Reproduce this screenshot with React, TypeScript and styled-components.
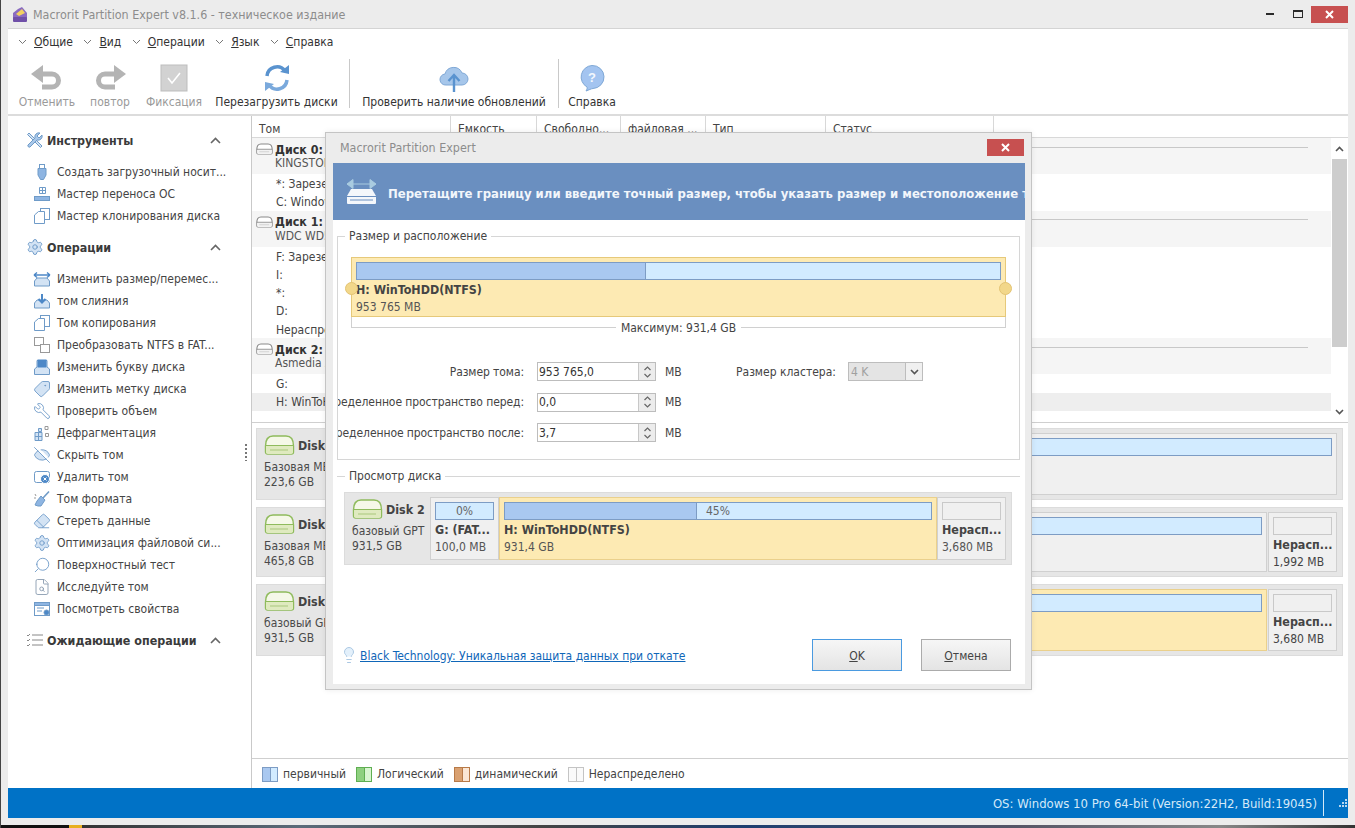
import React from "react";
import styled, { createGlobalStyle } from "styled-components";
import { Search, Wrench, Tag, EyeOff, Eraser, FileSearch, Settings, Lightbulb } from "lucide-react";

const FONT = `"DejaVu Sans Condensed", "Noto Sans", "Liberation Sans", sans-serif`;

const Global = createGlobalStyle`
  html, body { margin: 0; padding: 0; overflow: hidden; background: #ececec; }
  #root { width: 1355px; height: 828px; }
  * { box-sizing: border-box; }
  body { font-family: ${FONT}; font-size: 12px; color: #3c3c3c; }
`;

const Shell = styled.div`
  position: relative; width: 1355px; height: 828px; display: flex; flex-direction: column;
  background: #ececec; overflow: hidden; border-left: 1px solid #444;
`;
const TitleBar = styled.div`
  height: 28px; display: flex; align-items: center; padding: 0 7px 0 11px; flex: none;
`;
const TitleText = styled.span`margin-left: 5px; font-size: 12.4px; color: #8c8c8c; flex: 1;`;
const WinBtn = styled.div`
  width: 27px; height: 17px; display: flex; align-items: center; justify-content: center; margin-bottom: 0;
`;
const CloseBtn = styled.div<{ $w?: number }>`
  width: ${p => p.$w ?? 37}px; height: 17px; background: #c75050; display: flex; align-items: center; justify-content: center;
`;
const Frame = styled.div`
  flex: none; height: 790px; margin: 0 7px 0 7px; background: #fff; display: flex; flex-direction: column;
  border-top: 1px solid #d4d4d4;
`;
const MenuBar = styled.div`height: 26px; display: flex; align-items: center; padding-left: 10px; flex: none;`;
const MenuItem = styled.div`display: flex; align-items: center; gap: 7px; margin-right: 10.4px; color: #333;`;
const Under = styled.span`text-decoration: underline;`;
const Toolbar = styled.div`
  height: 61px; flex: none; display: flex; align-items: stretch; border-bottom: 2px solid #dcdcdc; padding-left: 10px;
`;
const ToolBtn = styled.div<{ $w: number; $off?: boolean }>`
  width: ${p => p.$w}px; display: flex; flex-direction: column; align-items: center; padding-top: 8px;
  color: ${p => (p.$off ? "#9a9a9a" : "#333")}; white-space: nowrap;
`;
const ToolIcon = styled.div`height: 30px; display: flex; align-items: center; margin-bottom: 2px;`;
const ToolSep = styled.div`width: 1px; background: #c9c9c9; margin: 4px 0 6px 0; flex: none;`;
const Main = styled.div`flex: 1; display: flex; min-height: 0;`;
const Sidebar = styled.aside`
  width: 244px; flex: none; position: relative; border-right: 1px solid #c9c9c9; padding: 12px 0 0 0;
`;
const SectionHead = styled.div<{ $mt?: number }>`
  height: 24px; display: flex; align-items: center; padding: 0 30px 0 18px; gap: 3px; margin-top: ${p => p.$mt ?? 0}px;
  font-weight: 700; color: #3a3a3a; font-size: 12.4px;
`;
const SectionLabel = styled.span`flex: 1; white-space: nowrap;`;
const ItemList = styled.div`margin-top: 9px;`;
const Item = styled.div`
  height: 22px; display: flex; align-items: center; padding-left: 25px; gap: 6px; color: #444; white-space: nowrap;
  & > svg { flex: none; }
`;
const GripDots = styled.div`
  position: absolute; right: 4px; top: 328px; width: 2px; height: 17px;
  background: repeating-linear-gradient(#777 0 2px, transparent 2px 4px);
`;
const Content = styled.div`flex: 1; min-width: 0; display: flex; flex-direction: column;`;
const TableHead = styled.div`
  height: 22px; display: flex; flex: none; border-bottom: 1px solid #d8d8d8;
`;
const HeadCell = styled.div<{ $w: number }>`
  width: ${p => p.$w}px; padding: 6px 0 0 7px; border-right: 1px solid #d8d8d8; flex: none; color: #444; white-space: nowrap; overflow: hidden;
`;
const ListPane = styled.div`
  height: 285px; flex: none; display: flex; border-bottom: 1px solid #cfcfcf; overflow: hidden;
`;
const ListBody = styled.div`flex: 1; min-width: 0;`;
const DiskHead = styled.div`height: 36.4px; background: #f5f5f5; padding: 4px 0 0 4px;`;
const DiskHeadTop = styled.div`height: 14px; display: flex; align-items: center; gap: 2px; font-weight: 700; font-size: 12.4px; color: #333; padding-right: 23px;`;
const HeadRule = styled.div`flex: 1; height: 1px; background: #c8c8c8; margin-left: 6px; margin-top: -4px;`;
const DiskSub = styled.div`height: 14px; padding-left: 19px; color: #555; white-space: nowrap;`;
const Row = styled.div<{ $sel?: boolean }>`
  height: 18.2px; padding: 1px 0 0 24px; display: flex; align-items: center; white-space: nowrap; color: #444;
  background: ${p => (p.$sel ? "#eeeeee" : "#fff")};
`;
const Scrollbar = styled.div`
  width: 16px; flex: none; display: flex; flex-direction: column; align-items: center; background: #fff; margin-right: 1px;
`;
const ScrollBtn = styled.div`height: 21px; display: flex; align-items: center; justify-content: center; flex: none;`;
const ScrollThumb = styled.div`width: 15px; height: 188px; background: #cdcdcd; flex: none;`;
const ScrollTrack = styled.div`flex: 1;`;
const DiskPane = styled.div`
  flex: 1; min-height: 0; padding: 5px 5px 0 4px; display: flex; flex-direction: column; gap: 7px;
`;
const DiskCard = styled.div<{ $h: number; $gap?: number }>`
  height: ${p => p.$h}px; flex: none; background: #e6e6e6; border: 1px solid #dcdcdc; display: flex; padding: 4px 5px 4px 0; gap: ${p => p.$gap ?? 1}px;
`;
const DiskInfo = styled.div<{ $w: number }>`
  width: ${p => p.$w}px; flex: none; padding: 2px 0 0 7px; color: #4a4a4a; white-space: nowrap; overflow: hidden;
`;
const DiskName = styled.div`display: flex; align-items: center; gap: 3px; font-weight: 700; font-size: 12.4px; height: 20px; margin-bottom: 5px; color: #444;`;
const InfoLine = styled.div`height: 15px; line-height: 15px; font-size: 12px;`;
const Part = styled.div<{ $kind?: "y" | "g"; $w?: number }>`
  ${p => (p.$w ? `width:${p.$w}px; flex:none;` : "flex:1; min-width:0;")}
  background: ${p => (p.$kind === "y" ? "#fdeab3" : "#f0f0f0")};
  border: 1px solid ${p => (p.$kind === "y" ? "#ead08c" : "#d0d0d0")};
  padding: 4px; overflow: hidden; white-space: nowrap;
`;
const Bar = styled.div<{ $empty?: boolean }>`
  height: 18px; border: 1px solid ${p => (p.$empty ? "#c9c9c9" : "#7d9cc4")};
  background: ${p => (p.$empty ? "#f0f0f0" : "#d2ebff")}; display: flex; position: relative; margin-bottom: 1px;
`;
const BarFill = styled.div`background: #a9c8f0; border-right: 1px solid #7d9cc4; height: 100%;`;
const BarLabel = styled.div`
  position: absolute; inset: 0; display: flex; align-items: center; justify-content: center; color: #666; font-size: 12px;
`;
const PartName = styled.div`font-weight: 700; height: 16px; line-height: 16px; margin-top: 2px; font-size: 12.4px; color: #444;`;
const PartSize = styled.div`height: 16px; line-height: 16px; margin-top: 1px; color: #555;`;
const Legend = styled.div`
  height: 30px; flex: none; border-top: 1px solid #cfcfcf; display: flex; align-items: center; padding: 1px 0 0 10px; color: #444;
`;
const Swatch = styled.div<{ $a: string; $b: string; $c: string }>`
  width: 16px; height: 15px; border: 1px solid ${p => p.$c};
  background: linear-gradient(90deg, ${p => p.$a} 50%, ${p => p.$c} 50%, ${p => p.$c} 56%, ${p => p.$b} 56%);
  margin-right: 5px; flex: none;
`;
const LegendText = styled.span`margin-right: 10px; white-space: nowrap;`;
const StatusBar = styled.div`
  height: 30px; flex: none; background: #0072c6; color: #d4e9f8; display: flex; align-items: center; justify-content: flex-end;
  font-size: 13px;
`;
const StatusSep = styled.div`width: 1px; height: 26px; background: #d4e9f8; margin: 0 15px 0 6px;`;
const Desk = styled.div`
  position: absolute; left: 0; right: 0; bottom: 0; height: 3px;
  background: linear-gradient(90deg,#111 0,#111 5%,#e8b020 5%,#e8b020 6%,#333 6%,#5b6b7a 22%,#444 40%,#1d3e70 55%,#556 75%,#888 90%,#333 100%);
`;

/* dialog */
const Dialog = styled.div`
  position: absolute; left: 324px; top: 132px; width: 707px; height: 558px; background: #ececec; border: 1px solid #c4c4c4;
  display: flex; flex-direction: column; padding: 0 6px 5px 7px; box-shadow: 0 0 6px rgba(0,0,0,.08);
`;
const DlgTitle = styled.div`height: 30px; flex: none; display: flex; align-items: center; justify-content: space-between; padding: 0 1px 2px 7px; color: #8c8c8c; font-size: 12.4px;`;
const DlgBody = styled.div`flex: 1; background: #fff; display: flex; flex-direction: column; min-height: 0;`;
const Banner = styled.div`
  height: 57px; flex: none; background: #6a8fc0; display: flex; align-items: center; padding-left: 13px; gap: 11px; overflow: hidden;
`;
const BannerText = styled.span`
  color: #f2f6fb; font-weight: 700; font-size: 13px; white-space: nowrap; margin-top: 4px;
`;
const Group = styled.fieldset`
  margin: 8px 5px 0 4px; padding: 13px 13px 0 13px; border: 1px solid #d6d6d6; height: 232px; min-width: 0; display: block;
`;
const GroupLegend = styled.legend<{ $ml: number }>`margin-left: ${p => p.$ml}px; padding: 0 4px; line-height: 16px; color: #444; height: 16px;`;
const LineGroup = styled.fieldset`
  margin: 8px 5px 0 4px; padding: 8px 8px 0 7px; border: 0; border-top: 1px solid #d6d6d6; min-width: 0;
`;
const SizePart = styled.div`
  position: relative; height: 60px; background: #fdeab3; border: 1px solid #e6c97a; padding: 4px;
`;
const Handle = styled.div<{ $right?: boolean }>`
  position: absolute; top: 24px; ${p => (p.$right ? "right:-7px" : "left:-7px")}; width: 13px; height: 13px; border-radius: 50%;
  background: #f2d78a; border: 1px solid #e3c373;
`;
const Bracket = styled.div`display: flex; height: 16px; color: #444; white-space: nowrap;`;
const BracketEdge = styled.div<{ $right?: boolean }>`
  flex: 1; height: 11px; border-bottom: 1px solid #d0d0d0;
  ${p => (p.$right ? "border-right" : "border-left")}: 1px solid #d0d0d0;
`;
const BracketText = styled.span`padding: 3px 5px 0; line-height: 16px;`;
const FormRows = styled.div`margin: 29px 0 0 -13px; display: flex; flex-direction: column; gap: 11.5px;`;
const FormRow = styled.div`height: 19px; display: flex; align-items: center;`;
const FormLabel = styled.div`
  width: 186px; flex: none; display: flex; justify-content: flex-end; overflow: hidden; white-space: nowrap; color: #444; letter-spacing: -0.08px;
`;
const Spin = styled.div`
  margin-left: 13px; width: 119px; height: 19px; flex: none; border: 1px solid #bdbdbd; display: flex; align-items: center; background: #fff;
  padding-left: 1px; color: #333;
`;
const SpinValue = styled.span`flex: 1;`;
const SpinBtn = styled.div`width: 17px; height: 100%; background: #ececec; border-left: 1px solid #c8c8c8; display: flex; align-items: center; justify-content: center;`;
const Unit = styled.span`margin-left: 9px; width: 28px; flex: none; color: #444;`;
const ClusterLabel = styled.span`margin-left: 43px; width: 112px; flex: none; color: #444;`;
const Select = styled.div`
  width: 75px; height: 19px; flex: none; border: 1px solid #bdbdbd; background: #e4e4e4; display: flex; align-items: center; color: #a0a0a0; padding-left: 2px;
`;
const SelectBtn = styled.div`width: 17px; height: 100%; background: #f0f0f0; border-left: 1px solid #bdbdbd; display: flex; align-items: center; justify-content: center; margin-left: auto;`;
const DlgFoot = styled.div`
  margin-top: auto; display: flex; align-items: center; padding: 0 14px 13px 7px;
`;
const HelpLink = styled.a`
  color: #0f66b8; text-decoration: underline; margin: 2px 0 0 2px; flex: 1; white-space: nowrap;
`;
const Btn = styled.div<{ $main?: boolean }>`
  width: 90px; height: 32px; margin-left: 19px; padding-top: 1px; display: flex; align-items: center; justify-content: center; color: #444; flex: none;
  background: linear-gradient(#f6f6f6, #e4e4e4); border: 1px solid ${p => (p.$main ? "#4a9ae0" : "#ababab")};
`;

const Chevron = () => (
  <svg width="9" height="6" viewBox="0 0 9 6"><path d="M1 1l3.5 3.5L8 1" fill="none" stroke="#777" strokeWidth="1" /></svg>
);
const ChevUp = () => (
  <svg width="11" height="7" viewBox="0 0 11 7"><path d="M1 6l4.5-4.5L10 6" fill="none" stroke="#666" strokeWidth="1.6" /></svg>
);
const HDD = ({ big, gray }: { big?: boolean; gray?: boolean }) => {
  const w = big ? 31 : 17, h = big ? 20 : 12;
  const s = gray ? "#8a8a8a" : "#8fbb5c";
  return (
    <svg width={w} height={h} viewBox="0 0 31 20" style={{ flex: "none" }}>
      <path d="M1.5 11 C1.5 5 4 1 9 1 H22 C27 1 29.5 5 29.5 11 V17 a2 2 0 0 1-2 2 H3.500 a2 2 0 0 1-2-2Z" fill={gray ? "#fff" : "#f5f8e8"} stroke={s} strokeWidth={big ? 1.4 : 2} />
      <path d="M2 11 H29 V17 a2 2 0 0 1-2 2 H4 a2 2 0 0 1-2-2Z" fill={gray ? "#f2f2f2" : "#dfeabf"} />
      <path d="M1.500 10.500H29.500" stroke={s} strokeWidth={big ? 1 : 1.600} />
      <path d="M6 15H24" stroke={gray ? "#bbb" : "#a9c77c"} strokeWidth="1" />
    </svg>
  );
};

const C = "#6f9bc8", L = "#d3e3f4", M = "#8eb5e2";
const S = ({ children }: { children: React.ReactNode }) => (
  <svg width="18" height="18" viewBox="0 0 18 18" fill="none" stroke={C} strokeWidth="1">{children}</svg>
);
const Tray = () => <path d="M1.500 11 L4 8 H14 L16.500 11 V16 H1.500Z" fill={L} />;
const lucideProps = { size: 18, color: C, strokeWidth: 1.2, fill: L };

const sideIcons: Record<string, React.ReactNode> = {
  usb: <S><rect x="6.500" y="1.500" width="5" height="4" fill="#fff" /><path d="M5 5.500h8V12l-2.500 4.500h-3L5 12Z" fill={M} /></S>,
  os: <S><path d="M6.500 2.500h6v6h-6zM9.500 2.500v6M6.500 5.500h6" fill="#fff" /><rect x="1.500" y="11.500" width="15" height="4" fill={M} /></S>,
  clone: <S><rect x="7.500" y="1.500" width="9" height="11" fill="#fff" /><path d="M1.500 16.500V8l4-3.500h6v12Z" fill="#fff" /></S>,
  resize: <S><Tray /><path d="M1 5h16M1 5l3-2.500M1 5l3 2.500M17 5l-3-2.500M17 5l-3 2.500" stroke="#4d88c7" strokeWidth="1.400" /></S>,
  merge: <S><Tray /><path d="M9 2v8M5.500 7L9 10.500 12.500 7" stroke="#4d88c7" strokeWidth="2" /></S>,
  conv: <S><rect x="1.500" y="1.500" width="9" height="8" fill="#fff" stroke="#999" /><rect x="7.500" y="8.500" width="9" height="8" fill="#fff" stroke="#999" /></S>,
  letter: <S><path d="M1.500 11 L4 9 V2.500h10V9l2.500 2V16.500h-15Z" fill={L} /><rect x="5" y="2" width="8" height="7" fill="#4d88c7" stroke="#4d88c7" /></S>,
  tag: <Tag {...lucideProps} style={{ transform: "scaleX(-1)" }} />,
  wrench: <Wrench {...lucideProps} fill="#fff" style={{ transform: "scaleX(-1)" }} />,
  defrag: <S><path d="M2 8.500h7v8H2zM2 12.500h7M5.500 8.500v8M5.500 4.500h3v3h-3z" fill={L} /><path d="M12 2.500h3v3h-3zM12.500 9.500h3v3h-3z" stroke="#999" /></S>,
  hide: <EyeOff {...lucideProps} />,
  del: <S><path d="M1.500 5.500a2 2 0 0 1 2-2h11a2 2 0 0 1 2 2v7a2 2 0 0 1-2 2h-11a2 2 0 0 1-2-2Z" fill="#fff" /><circle cx="12" cy="11" r="4.500" fill="#4d88c7" stroke="#fff" /><path d="M10.500 9.500l3 3M13.500 9.500l-3 3" stroke="#fff" /></S>,
  brush: <S><path d="M16 1.500L10 8" strokeWidth="1.600" /><path d="M4 11l4-5 4 4-4 6H5l-3-1Z" fill={M} /><path d="M2 4l1 2M1 8h2" stroke="#999" /></S>,
  eraser: <Eraser {...lucideProps} />,
  gear: <Settings {...lucideProps} />,
  search: <Search {...lucideProps} fill="#fff" style={{ transform: "scaleX(-1)" }} />,
  file: <FileSearch {...lucideProps} color="#8a9cb0" fill="#fff" />,
  props: <S><rect x="1.500" y="2.500" width="15" height="13" fill="#fff" /><rect x="1.500" y="2.500" width="15" height="3" fill={M} /><path d="M4 8h7M4 11h5" /><circle cx="13.500" cy="12.500" r="2.500" fill="#4d88c7" /></S>,
};

const sideTools: [string, string][] = [
  ["usb", "Создать загрузочный носит..."],
  ["os", "Мастер переноса ОС"],
  ["clone", "Мастер клонирования диска"],
];
const sideOps: [string, string][] = [
  ["resize", "Изменить размер/перемес..."],
  ["merge", "том слияния"],
  ["clone", "Том копирования"],
  ["conv", "Преобразовать NTFS в FAT..."],
  ["letter", "Изменить букву диска"],
  ["tag", "Изменить метку диска"],
  ["wrench", "Проверить объем"],
  ["defrag", "Дефрагментация"],
  ["hide", "Скрыть том"],
  ["del", "Удалить том"],
  ["brush", "Том формата"],
  ["eraser", "Стереть данные"],
  ["gear", "Оптимизация файловой си..."],
  ["search", "Поверхностный тест"],
  ["file", "Исследуйте том"],
  ["props", "Посмотреть свойства"],
];

const Arrow = ({ flip }: { flip?: boolean }) => (
  <svg width="34" height="28" viewBox="0 0 34 28" style={flip ? { transform: "scaleX(-1)" } : undefined}>
    <path d="M10 10H22a6.500 6.500 0 0 1 0 13H12" fill="none" stroke="#b4b4b4" strokeWidth="5" />
    <path d="M1 10L13 1V19Z" fill="#b4b4b4" />
  </svg>
);

function Unalloc({ size, w, dim }: { size: string; w: number; dim?: boolean }) {
  return (
    <Part $w={w}>
      <Bar $empty />
      <PartName>Нерасп...</PartName>
      <PartSize style={dim ? undefined : { color: "#444" }}>{size}</PartSize>
    </Part>
  );
}

function SpinRow({ label, value, children }: { label: string; value: string; children?: React.ReactNode }) {
  return (
    <FormRow>
      <FormLabel>{label}</FormLabel>
      <Spin>
        <SpinValue>{value}</SpinValue>
        <SpinBtn>
          <svg width="9" height="14" viewBox="0 0 9 14"><path d="M1.500 5L4.500 2l3 3M1.500 9l3 3 3-3" fill="none" stroke="#666" strokeWidth="1.200" /></svg>
        </SpinBtn>
      </Spin>
      <Unit>MB</Unit>
      {children}
    </FormRow>
  );
}

export default function App() {
  return (
    <Shell>
      <Global />
      <TitleBar>
        <svg width="16" height="17" viewBox="0 0 16 17">
          <path d="M1 15V7l5-4 4-2 5 6v8Z" fill="#8a6bc0" />
          <path d="M4 8l6-5 3 4-6 3Z" fill="#f2d060" />
          <rect x="1" y="11" width="14" height="5" rx="1" fill="#6f4fa8" />
        </svg>
        <TitleText>Macrorit Partition Expert v8.1.6 - техническое издание</TitleText>
        <WinBtn><svg width="9" height="4" viewBox="0 0 9 4"><rect y="1" width="8" height="2" fill="#2a2a2a" /></svg></WinBtn>
        <WinBtn><svg width="10" height="8" viewBox="0 0 10 8"><rect x=".5" y=".5" width="9" height="7" fill="none" stroke="#2a2a2a" /><rect width="10" height="2" fill="#2a2a2a" /></svg></WinBtn>
        <CloseBtn><svg width="9" height="9" viewBox="0 0 9 9"><path d="M1 1l7 7M8 1l-7 7" stroke="#fff" strokeWidth="2" /></svg></CloseBtn>
      </TitleBar>
      <Frame>
        <MenuBar>
          <MenuItem><Chevron /><span><Under>О</Under>бщие</span></MenuItem>
          <MenuItem><Chevron /><span><Under>В</Under>ид</span></MenuItem>
          <MenuItem><Chevron /><span><Under>О</Under>перации</span></MenuItem>
          <MenuItem><Chevron /><span><Under>Я</Under>зык</span></MenuItem>
          <MenuItem><Chevron /><span><Under>С</Under>правка</span></MenuItem>
        </MenuBar>
        <Toolbar>
          <ToolBtn $w={58} $off><ToolIcon><Arrow /></ToolIcon>Отменить</ToolBtn>
          <ToolBtn $w={68} $off><ToolIcon><Arrow flip /></ToolIcon>повтор</ToolBtn>
          <ToolBtn $w={60} $off>
            <ToolIcon>
              <svg width="28" height="28" viewBox="0 0 28 28"><rect x="1" y="1" width="26" height="26" fill="#d2d2d2" stroke="#bdbdbd" /><path d="M8 14l4 5 8-10" fill="none" stroke="#fff" strokeWidth="1.600" /></svg>
            </ToolIcon>
            Фиксация
          </ToolBtn>
          <ToolBtn $w={145}>
            <ToolIcon>
              <svg width="28" height="30" viewBox="0 0 28 30">
                <path d="M4 13A10 10 0 0 1 22 8" fill="none" stroke="#5a93cf" strokeWidth="3.500" />
                <path d="M17 9L26 11V2Z" fill="#5a93cf" />
                <path d="M24 17A10 10 0 0 1 6 22" fill="none" stroke="#7aa9dc" strokeWidth="3.500" />
                <path d="M11 21L2 19V28Z" fill="#7aa9dc" />
              </svg>
            </ToolIcon>
            Перезагрузить диски
          </ToolBtn>
          <ToolSep />
          <ToolBtn $w={208}>
            <ToolIcon>
              <svg width="30" height="30" viewBox="0 0 30 30">
                <path d="M7 22a5.500 5.500 0 0 1-1-11 9 9 0 0 1 17-1 6 6 0 0 1 0 12Z" fill="#a6c6ea" stroke="#7fa8d6" />
                <path d="M15 29V13M9.500 18L15 12l5.500 6" fill="none" stroke="#5a93cf" strokeWidth="2.400" />
              </svg>
            </ToolIcon>
            Проверить наличие обновлений
          </ToolBtn>
          <ToolSep />
          <ToolBtn $w={66}>
            <ToolIcon>
              <svg width="26" height="28" viewBox="0 0 26 28">
                <path d="M13 1.500a11.500 11.500 0 0 1 1 23c-2 .2-4 1.500-7 2.500 1-1.500 1.500-3 1-4A11.500 11.500 0 0 1 13 1.500Z" fill="#a3c4f0" stroke="#7fa8d6" />
                <text x="13" y="18" textAnchor="middle" fontSize="13" fontWeight="700" fill="#f4f8fd" fontFamily="Liberation Sans, sans-serif">?</text>
              </svg>
            </ToolIcon>
            Справка
          </ToolBtn>
        </Toolbar>
        <Main>
          <Sidebar>
            <SectionHead>
              <svg width="18" height="18" viewBox="0 0 18 18" fill="none" stroke="#6f9bc8">
                <path d="M3 2l13 13-1.500 1.500L1.500 3.500Z" fill="#d3e3f4" />
                <path d="M16 4l-3 3-2-2 3-3a4 4 0 0 0-5 5L2 14a1.500 1.500 0 0 0 2 2l7-7a4 4 0 0 0 5-5Z" fill="#a9c8ea" />
              </svg>
              <SectionLabel>Инструменты</SectionLabel><ChevUp />
            </SectionHead>
            <ItemList>
              {sideTools.map(([ic, t]) => <Item key={t}>{sideIcons[ic]}{t}</Item>)}
            </ItemList>
            <SectionHead $mt={8}>
              <Settings size={18} color={C} strokeWidth={1.3} fill={L} />
              <SectionLabel>Операции</SectionLabel><ChevUp />
            </SectionHead>
            <ItemList>
              {sideOps.map(([ic, t]) => <Item key={t}>{sideIcons[ic]}{t}</Item>)}
            </ItemList>
            <SectionHead $mt={8}>
              <svg width="18" height="14" viewBox="0 0 18 14" fill="none" stroke="#888">
                <path d="M6 2h11M6 7h11M6 12h11" /><path d="M1 2l1 1 2-2M1 7l1 1 2-2M1 12l1 1 2-2" />
              </svg>
              <SectionLabel>Ожидающие операции</SectionLabel><ChevUp />
            </SectionHead>
            <GripDots />
          </Sidebar>
          <Content>
            <TableHead>
              <HeadCell $w={199}>Том</HeadCell>
              <HeadCell $w={86}>Емкость</HeadCell>
              <HeadCell $w={84}>Свободно...</HeadCell>
              <HeadCell $w={85}>файловая ...</HeadCell>
              <HeadCell $w={120}>Тип</HeadCell>
              <HeadCell $w={168}>Статус</HeadCell>
            </TableHead>
            <ListPane>
              <ListBody>
                <DiskHead>
                  <DiskHeadTop><HDD gray />Диск 0:<HeadRule /></DiskHeadTop>
                  <DiskSub>KINGSTON SA400S37240G</DiskSub>
                </DiskHead>
                <Row>*: Зарезервировано</Row>
                <Row>C: Windows</Row>
                <DiskHead>
                  <DiskHeadTop><HDD gray />Диск 1:<HeadRule /></DiskHeadTop>
                  <DiskSub>WDC WD5000AAKX</DiskSub>
                </DiskHead>
                <Row>F: Зарезервировано</Row>
                <Row>I:</Row>
                <Row>*:</Row>
                <Row>D:</Row>
                <Row>Нераспределено</Row>
                <DiskHead>
                  <DiskHeadTop><HDD gray />Диск 2:<HeadRule /></DiskHeadTop>
                  <DiskSub>Asmedia ASM1153E</DiskSub>
                </DiskHead>
                <Row>G:</Row>
                <Row $sel>H: WinToHDD</Row>
              </ListBody>
              <Scrollbar>
                <ScrollBtn><svg width="9" height="6" viewBox="0 0 9 6"><path d="M1 5l3.500-3.500L8 5" fill="none" stroke="#555" strokeWidth="1.600" /></svg></ScrollBtn>
                <ScrollThumb />
                <ScrollTrack />
                <ScrollBtn><svg width="9" height="6" viewBox="0 0 9 6"><path d="M1 1l3.500 3.500L8 1" fill="none" stroke="#555" strokeWidth="1.600" /></svg></ScrollBtn>
              </Scrollbar>
            </ListPane>
            <DiskPane>
              <DiskCard $h={72}>
                <DiskInfo $w={90}>
                  <DiskName><HDD big />Disk 0</DiskName>
                  <InfoLine>Базовая MBR</InfoLine>
                  <InfoLine>223,6 GB</InfoLine>
                </DiskInfo>
                <Part><Bar /></Part>
              </DiskCard>
              <DiskCard $h={70}>
                <DiskInfo $w={90}>
                  <DiskName><HDD big />Disk 1</DiskName>
                  <InfoLine>Базовая MBR</InfoLine>
                  <InfoLine>465,8 GB</InfoLine>
                </DiskInfo>
                <Part><Bar /></Part>
                <Unalloc size="1,992 MB" w={69} />
              </DiskCard>
              <DiskCard $h={72}>
                <DiskInfo $w={90}>
                  <DiskName><HDD big />Disk 2</DiskName>
                  <InfoLine>базовый GPT</InfoLine>
                  <InfoLine>931,5 GB</InfoLine>
                </DiskInfo>
                <Part $kind="y"><Bar /></Part>
                <Unalloc size="3,680 MB" w={69} />
              </DiskCard>
            </DiskPane>
            <Legend>
              <Swatch $a="#a9c8f0" $b="#d2ebff" $c="#7d9cc4" /><LegendText>первичный</LegendText>
              <Swatch $a="#8ed07f" $b="#d8f5d0" $c="#5fae52" /><LegendText>Логический</LegendText>
              <Swatch $a="#d9a070" $b="#fbe6d4" $c="#b87a48" /><LegendText>динамический</LegendText>
              <Swatch $a="#fafafa" $b="#fafafa" $c="#c4c4c4" /><LegendText>Нераспределено</LegendText>
            </Legend>
          </Content>
        </Main>
        <StatusBar>
          OS: Windows 10 Pro 64-bit (Version:22H2, Build:19045)
          <StatusSep />
          <svg width="9" height="9" viewBox="0 0 9 9" fill="#b8d8f0">
            <rect x="6" y="0" width="2" height="2" /><rect x="3" y="3" width="2" height="2" /><rect x="6" y="3" width="2" height="2" />
            <rect x="0" y="6" width="2" height="2" /><rect x="3" y="6" width="2" height="2" /><rect x="6" y="6" width="2" height="2" />
          </svg>
        </StatusBar>
      </Frame>
      <Desk />
      <Dialog>
        <DlgTitle>
          Macrorit Partition Expert
          <CloseBtn><svg width="9" height="9" viewBox="0 0 9 9"><path d="M1 1l7 7M8 1l-7 7" stroke="#fff" strokeWidth="2" /></svg></CloseBtn>
        </DlgTitle>
        <DlgBody>
          <Banner>
            <svg width="31" height="26" viewBox="0 0 31 26" style={{ flex: "none" }}>
              <path d="M1 5h29M1 5l6-4.500V9.500ZM30 5l-6-4.500V9.500Z" fill="#a9cbe0" stroke="#a9cbe0" />
              <path d="M1 17l4-7h21l4 7v7a1 1 0 0 1-1 1H2a1 1 0 0 1-1-1Z" fill="#f4f7fb" />
              <path d="M1 17.500h29M4 21h23" stroke="#6a8fc0" />
            </svg>
            <BannerText>Перетащите границу или введите точный размер, чтобы указать размер и местоположение тома</BannerText>
          </Banner>
          <Group>
            <GroupLegend $ml={-6}>Размер и расположение</GroupLegend>
            <SizePart>
              <Bar><BarFill style={{ width: "45%" }} /></Bar>
              <PartName>H: WinToHDD(NTFS)</PartName>
              <PartSize>953 765 MB</PartSize>
              <Handle />
              <Handle $right />
            </SizePart>
            <Bracket>
              <BracketEdge />
              <BracketText>Максимум: 931,4 GB</BracketText>
              <BracketEdge $right />
            </Bracket>
            <FormRows>
              <SpinRow label="Размер тома:" value="953 765,0">
                <ClusterLabel>Размер кластера:</ClusterLabel>
                <Select>4 K<SelectBtn><svg width="9" height="6" viewBox="0 0 9 6"><path d="M1 1l3.500 3.500L8 1" fill="none" stroke="#555" strokeWidth="1.600" /></svg></SelectBtn></Select>
              </SpinRow>
              <SpinRow label="Нераспределенное пространство перед:" value="0,0" />
              <SpinRow label="Нераспределенное пространство после:" value="3,7" />
            </FormRows>
          </Group>
          <LineGroup>
            <GroupLegend $ml={1}>Просмотр диска</GroupLegend>
            <DiskCard $h={73} $gap={0}>
              <DiskInfo $w={85}>
                <DiskName><HDD big />Disk 2</DiskName>
                <InfoLine>базовый GPT</InfoLine>
                <InfoLine>931,5 GB</InfoLine>
              </DiskInfo>
              <Part $w={69}>
                <Bar><BarLabel>0%</BarLabel></Bar>
                <PartName>G: (FAT...</PartName>
                <PartSize>100,0 MB</PartSize>
              </Part>
              <Part $kind="y">
                <Bar><BarFill style={{ width: "45%" }} /><BarLabel>45%</BarLabel></Bar>
                <PartName>H: WinToHDD(NTFS)</PartName>
                <PartSize>931,4 GB</PartSize>
              </Part>
              <Unalloc size="3,680 MB" w={69} dim />
            </DiskCard>
          </LineGroup>
          <DlgFoot>
            <Lightbulb size={18} color="#a9c6e2" fill="#e3f0fb" strokeWidth={1.300} />
            <HelpLink>Black Technology: Уникальная защита данных при откате</HelpLink>
            <Btn $main><Under>O</Under>K</Btn>
            <Btn><span><Under>О</Under>тмена</span></Btn>
          </DlgFoot>
        </DlgBody>
      </Dialog>
    </Shell>
  );
}
